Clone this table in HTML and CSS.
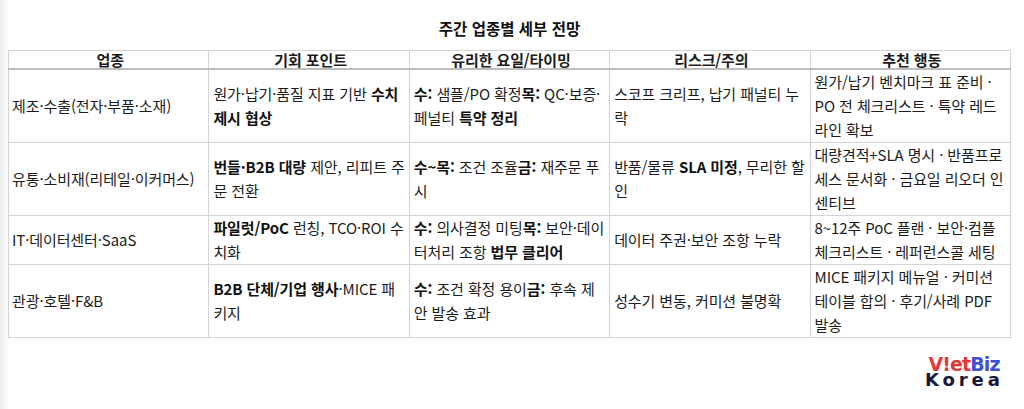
FILE: index.html
```html
<!DOCTYPE html>
<html lang="ko">
<head>
<meta charset="utf-8">
<title>주간 업종별 세부 전망</title>
<link rel="stylesheet" href="styles.css">
</head>
<body>
<div class="page">
  <h3 class="title">주간 업종별 세부 전망</h3>
  <table class="outlook">
    <colgroup>
      <col class="c"><col class="c"><col class="c"><col class="c"><col class="c">
    </colgroup>
    <thead>
      <tr>
        <th>업종</th>
        <th>기회 포인트</th>
        <th>유리한 요일/타이밍</th>
        <th>리스크/주의</th>
        <th>추천 행동</th>
      </tr>
    </thead>
    <tbody>
      <tr>
        <td>제조·수출(전자·부품·소재)</td>
        <td>원가·납기·품질 지표 기반 <b>수치 제시 협상</b></td>
        <td><b>수:</b> 샘플/PO 확정<b>목:</b> QC·보증·페널티 <b>특약 정리</b></td>
        <td>스코프 크리프, 납기 패널티 누락</td>
        <td>원가/납기 벤치마크 표 준비 · PO 전 체크리스트 · 특약 레드라인 확보</td>
      </tr>
      <tr>
        <td>유통·소비재(리테일·이커머스)</td>
        <td><b>번들·B2B 대량</b> 제안, 리피트 주문 전환</td>
        <td><b>수~목:</b> 조건 조율<b>금:</b> 재주문 푸시</td>
        <td>반품/물류 <b>SLA 미정</b>, 무리한 할인</td>
        <td>대량견적+SLA 명시 · 반품프로세스 문서화 · 금요일 리오더 인센티브</td>
      </tr>
      <tr>
        <td>IT·데이터센터·SaaS</td>
        <td><b>파일럿/PoC</b> 런칭, TCO·ROI 수치화</td>
        <td><b>수:</b> 의사결정 미팅<b>목:</b> 보안·데이터처리 조항 <b>법무 클리어</b></td>
        <td>데이터 주권·보안 조항 누락</td>
        <td>8~12주 PoC 플랜 · 보안·컴플 체크리스트 · 레퍼런스콜 세팅</td>
      </tr>
      <tr>
        <td>관광·호텔·F&amp;B</td>
        <td><b>B2B 단체/기업 행사</b>·MICE 패키지</td>
        <td><b>수:</b> 조건 확정 용이<b>금:</b> 후속 제안 발송 효과</td>
        <td>성수기 변동, 커미션 불명확</td>
        <td>MICE 패키지 메뉴얼 · 커미션 테이블 합의 · 후기/사례 PDF 발송</td>
      </tr>
    </tbody>
  </table>
  <div class="footer">
    <div class="logo">
      <div class="logo-top"><span class="red">V!et</span><span class="blue">Biz</span></div>
      <div class="logo-bottom">Korea</div>
    </div>
  </div>
</div>
</body>
</html>
```

FILE: styles.css
```css
html, body {
  margin: 0;
  padding: 0;
}
body {
  background: linear-gradient(90deg, #ececec 0, #f6f6f6 5px, #ffffff 9px);
  font-family: "Noto Sans CJK KR", "Noto Sans", sans-serif;
  color: #1c1c1c;
  width: 1024px;
  height: 409px;
  overflow: hidden;
}
.page {
  padding: 0 13px 0 8px;
}
.title {
  margin: 0 0 12px;
  padding-top: 18px;
  font-size: 15.5px;
  line-height: 20px;
  font-weight: 700;
  text-align: center;
  color: #111;
}
.outlook {
  width: 1003px;
  border-collapse: collapse;
  table-layout: fixed;
  font-size: 15px;
  line-height: 24px;
  letter-spacing: -0.1px;
  background: #fff;
}
.outlook .c {
  width: 20%;
}
.outlook th,
.outlook td {
  border: 1px solid #d4d4d4;
  padding: 0 1px 0 4px;
  vertical-align: middle;
  text-align: left;
  word-break: normal;
}
.outlook th {
  text-align: center;
  font-weight: 700;
  line-height: 17px;
  border-bottom: 2px solid #bdbdbd;
}
.outlook td:first-child {
  padding-left: 3px;
}
.outlook b {
  font-weight: 700;
  color: #111;
}
.footer {
  display: flex;
  justify-content: flex-end;
  padding-top: 18px;
  padding-right: 8px;
}
.logo {
  display: flex;
  flex-direction: column;
  font-family: "DejaVu Sans", sans-serif;
  font-weight: 700;
  width: 78px;
}
.logo-top {
  font-size: 19px;
  line-height: 16px;
  letter-spacing: -0.9px;
  text-align: center;
}
.logo-top .red {
  color: #e2383a;
}
.logo-top .blue {
  color: #3f4fd6;
}
.logo-bottom {
  font-size: 18px;
  line-height: 16px;
  color: #16183f;
  letter-spacing: 3.9px;
  text-align: left;
}
```
